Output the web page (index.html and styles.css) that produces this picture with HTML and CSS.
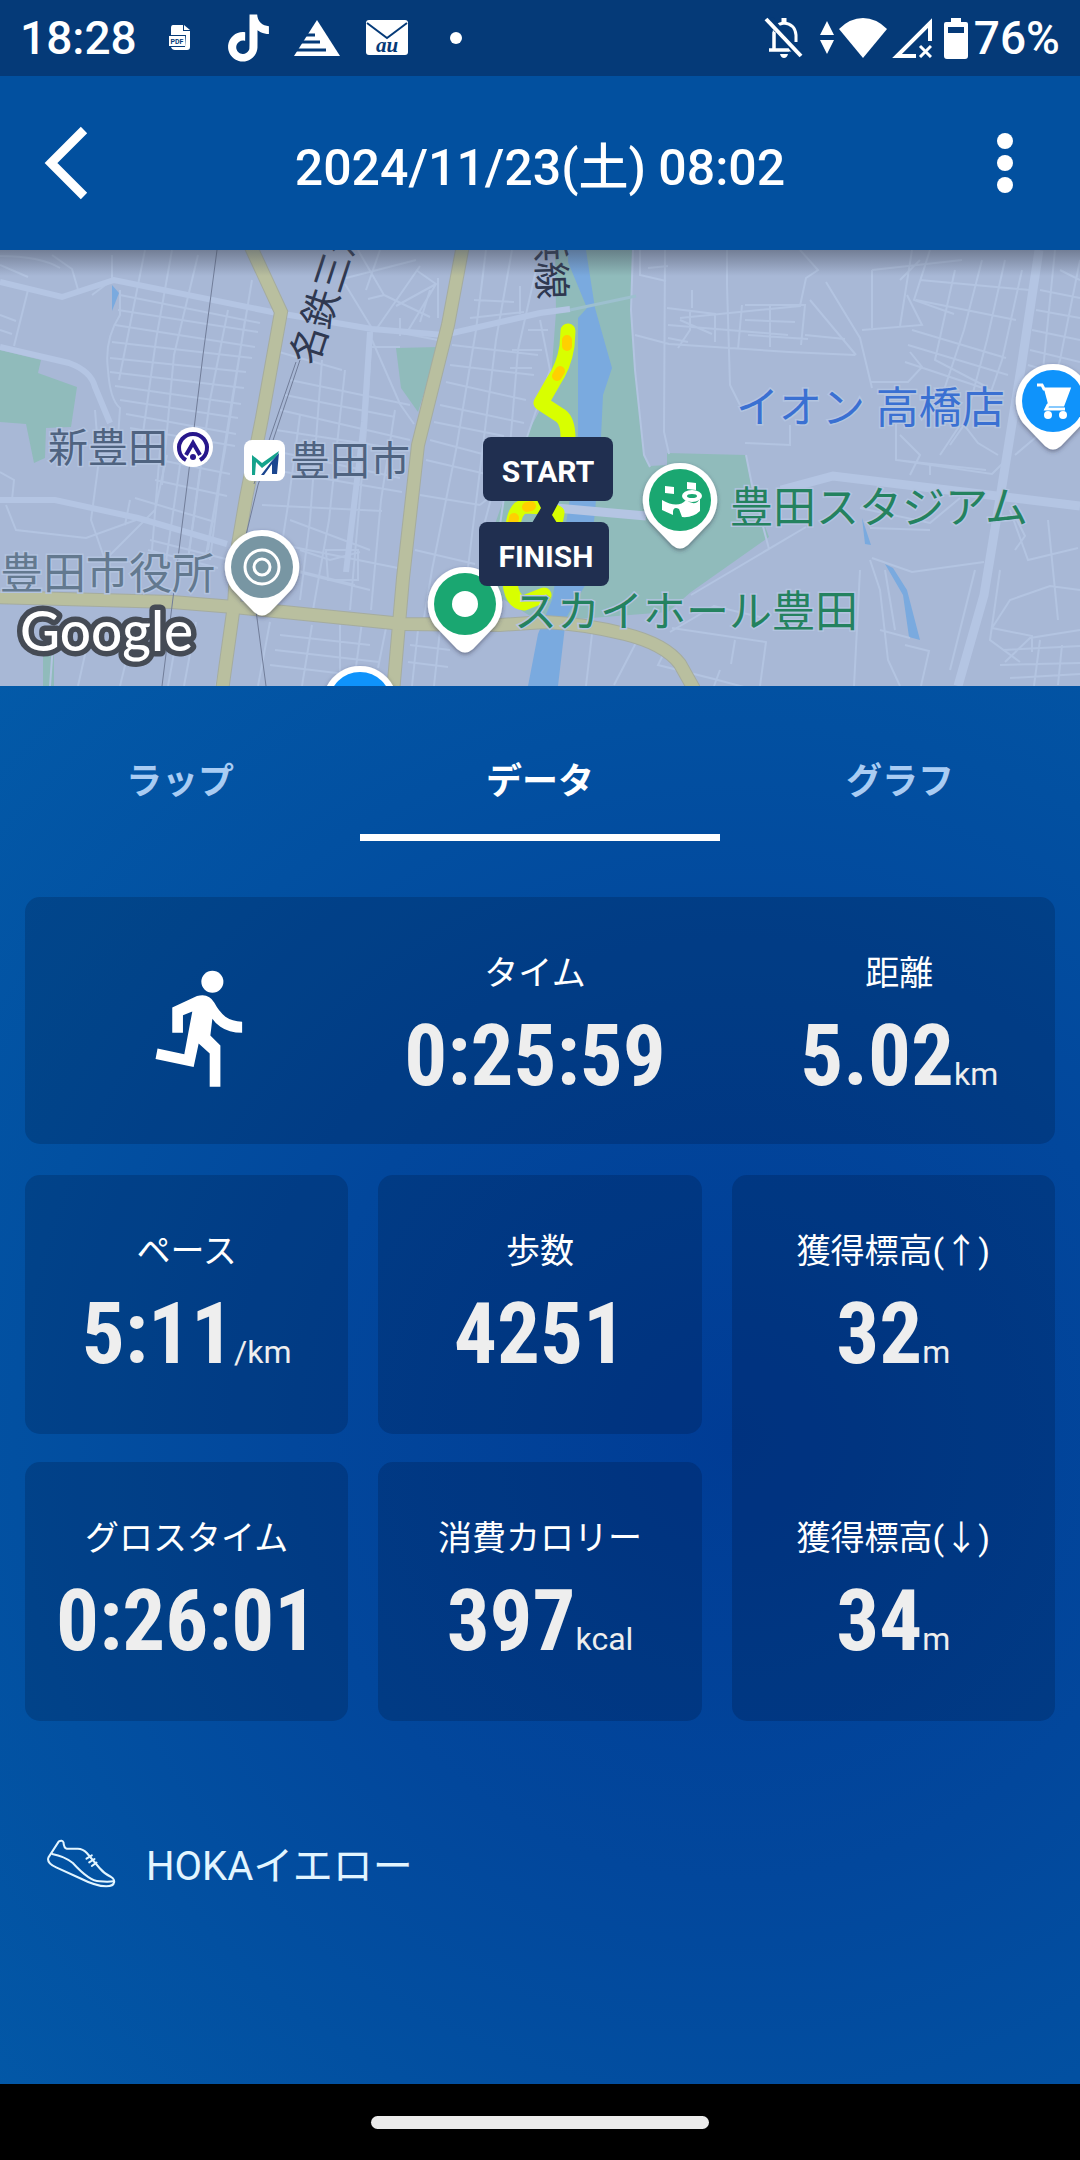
FILE: index.html
```html
<!DOCTYPE html>
<html lang="ja">
<head>
    <meta charset="UTF-8">
    <meta name="viewport" content="width=device-width, initial-scale=1.0">
    <title>2024/11/23(土) 08:02</title>
    <link rel="stylesheet" href="styles.css">
</head>
<body>
    <div class="status-bar">
        <div class="status-left">
            <span class="clock">18:28</span>
            <svg class="icon-pdf" width="22" height="26" viewBox="0 0 22 26">
                <path d="M4 0h10v6h7v16q0 3-3 3H6q-3 0-4-3h14l1-12H2V3q0-3 2-3z" fill="#fff"/>
                <path d="M15 0l6 5h-6z" fill="#fff"/>
                <rect x="0" y="11" width="16" height="10" fill="#fff"/>
                <text x="8" y="19" class="pdf-text">PDF</text>
            </svg>
            <svg class="icon-tiktok" width="47" height="48" viewBox="0 0 24 24" fill="#fff">
                <path d="M12.525.02c1.31-.02 2.61-.01 3.91-.02.08 1.53.63 3.09 1.75 4.17 1.12 1.11 2.7 1.62 4.24 1.79v4.03c-1.44-.05-2.89-.35-4.2-.97-.57-.26-1.1-.59-1.62-.93-.01 2.92.01 5.84-.02 8.75-.08 1.4-.54 2.79-1.35 3.94-1.31 1.92-3.58 3.17-5.91 3.21-1.43.08-2.86-.31-4.08-1.03-2.02-1.19-3.44-3.37-3.65-5.71-.02-.5-.03-1-.01-1.49.18-1.9 1.12-3.72 2.58-4.96 1.66-1.44 3.98-2.13 6.15-1.72.02 1.48-.04 2.96-.04 4.44-.99-.32-2.15-.23-3.02.37-.63.41-1.11 1.04-1.36 1.75-.21.51-.15 1.07-.14 1.61.24 1.64 1.82 3.02 3.5 2.87 1.12-.01 2.19-.66 2.77-1.61.19-.33.4-.67.41-1.06.1-1.79.06-3.57.07-5.36.01-4.03-.01-8.05.02-12.07z"/>
            </svg>
            <svg class="icon-triangle" width="46" height="36" viewBox="0 0 46 36">
                <path d="M23 0l23 36H0z" fill="#fff"/>
                <path d="M10 15h11M6 22h20M2 30h30" stroke="#053a78" stroke-width="3"/>
            </svg>
            <svg class="icon-mail" width="42" height="36" viewBox="0 0 42 36">
                <rect width="42" height="35" rx="3" fill="#fff"/>
                <path d="M1 3l20 15L41 3" stroke="#053a78" stroke-width="2" fill="none"/>
                <text x="21" y="32" class="au-text">au</text>
            </svg>
            <svg class="icon-more" width="12" height="12" viewBox="0 0 12 12"><circle cx="6" cy="6" r="6" fill="#fff"/></svg>
        </div>
        <div class="status-right">
            <svg class="icon-bell" width="40" height="42" viewBox="0 0 40 42" fill="none" stroke="#fff">
                <path d="M5 33h30M10 32V17q0-10 10-11q11 1 12 12v7" stroke-width="3"/>
                <path d="M20 1v5" stroke-width="5"/>
                <path d="M5 2l32 38" stroke="#053a78" stroke-width="8"/>
                <path d="M5 33h20M10 33V15" stroke-width="3"/>
                <path d="M2 2l35 37" stroke-width="4"/>
                <path d="M16 37h8q-1 4-4 4t-4-4z" fill="#fff" stroke="none"/>
            </svg>
            <svg class="icon-traffic" width="14" height="34" viewBox="0 0 14 34" fill="#fff">
                <path d="M7 0l7 14H0zM0 19h14L7 33z"/>
            </svg>
            <svg class="icon-wifi" width="48" height="40" viewBox="0 0 48 40" fill="#fff">
                <path d="M24 40L0 11Q11 0 24 0t24 11z"/>
            </svg>
            <svg class="icon-signal" width="40" height="40" viewBox="0 0 40 40" fill="none" stroke="#fff">
                <path d="M24 38H5L38 5v18" stroke-width="4"/>
                <path d="M28 28l11 11M39 28L28 39" stroke-width="3"/>
            </svg>
            <svg class="icon-battery" width="24" height="41" viewBox="0 0 24 41">
                <path d="M7 0h10v4h5q2 0 2 2v32q0 3-3 3H3q-3 0-3-3V6q0-2 2-2h5z" fill="#fff"/>
                <path d="M4 9h16v6H4z" fill="#053a78"/>
            </svg>
            <span class="battery-text">76%</span>
        </div>
    </div>

    <header>
        <button class="header-btn" aria-label="戻る">
            <svg width="46" height="74" viewBox="0 0 46 74" fill="none" stroke="#fff" stroke-width="9">
                <path d="M41 4L8 37l33 33"/>
            </svg>
        </button>
        <h1>2024/11/23(土) 08:02</h1>
        <button class="header-btn" aria-label="メニュー">
            <svg width="16" height="60" viewBox="0 0 16 60" fill="#fff">
                <circle cx="8" cy="8" r="8"/>
                <circle cx="8" cy="30" r="8"/>
                <circle cx="8" cy="52" r="8"/>
            </svg>
        </button>
    </header>

    <section class="map">
        <svg class="map-canvas" viewBox="0 0 1080 436" preserveAspectRatio="xMidYMid slice">
            <defs>
                <linearGradient id="shade" x1="0" y1="0" x2="0" y2="1">
                    <stop offset="0" stop-color="#3d4454" stop-opacity=".5"/>
                    <stop offset="1" stop-color="#3d4454" stop-opacity="0"/>
                </linearGradient>
                <filter id="pin-shadow" x="-20%" y="-20%" width="140%" height="150%">
                    <feDropShadow dx="0" dy="2" stdDeviation="2" flood-color="#334" flood-opacity=".5"/>
                </filter>
                <path id="pin" d="M0-37a37 37 0 0 1 30 59L8 45q-8 7-16 0L-30 22A37 37 0 0 1 0-37z" fill="#fff" filter="url(#pin-shadow)"/>
            </defs>

            <rect width="1080" height="436" fill="#a8b8d6"/>

            <!-- parks -->
            <g fill="#90bbbb">
                <path d="M0 100l41 10-3 13 39 14-6 40-25 1-1 30-11 5-8-39-26-2z"/>
                <path d="M396 98l43-1-21 65-17-24z"/>
                <path d="M43 402h11v34H43z"/>
                <path d="M555 0h77l-1 60 4 60 9 85 6 11 17-1v-12l79 2 6 35 17 47-78 55-23 20-128 10-65-40 38-110 15-40 22-40 6-80z"/>
            </g>

            <!-- river and creeks -->
            <g fill="#7aaadf">
                <path d="M568 0h18l9 58 17 60-9 27-2 42-6 75-8 70-21 36-8 68h-30l10-52 14-34 16-88 10-75V68l9-10-19-46z"/>
                <path d="M112 35l7 8-7 18z"/>
                <path d="M862 268l9 27-6-1zM885 314l8 4 14 22 13 50-11-3-6-42z"/>
            </g>

            <!-- small streets -->
            <g class="street">
                <path d="M0 15l28 12M52 5l20 14 7 24M28 40l-14 56M112 5v25l-20 15M0 65l16 6M0 80l12 4M0 6q40 0 60 12"/>
                <path d="M120 40v25q-16 25-12 55 2 30 12 38l-2 30M145 0l-12 60-14 70M172 0l-16 90-14 100M198 5l-24 100-12 130M228 60l-18 90-22 160M252 30l-20 120-24 150M245 70l-20 130-20 110"/>
                <path d="M120 45l140 28M118 60l140 22M115 75l140 22M112 92l140 16M110 108l136 14M110 122l134 16M115 136l126 18M120 150l118 18M126 164l110 20M130 178l105 18"/>
                <path d="M0 222l14 8-2 20M6 255l10 25 70 8 50-18M95 160l4 50-8 60 14 40 50-50 12-55M130 250l-5 25M135 248l80 24M160 210l70 14M155 230l72 16M150 290l80 20M148 300l70 18M160 200l-8 100M180 215l-14 96M200 220l-12 90M220 230l-10 80"/>
                <path d="M272 100l70 20M290 130l120 25M285 145l110 22M280 160l130 30M276 180l130 20M270 200l130 28M262 218l140 24M262 255l120 6M258 290l140 28M255 310l100 25M300 165l-12 90-14 90M322 110l-12 160-10 80M345 120l-16 150-16 90M372 80l-6 100-16 180M395 160l-14 90-10 110M326 300h32v30h-30z"/>
                <path d="M346 28l70-18M420 16l-45 65M345 34l28 46M358 0l26 45-16 4M380 0l-14 40M416 20l20 14-30 50M436 34l-40 22M384 45l46 22M400 68v18M372 90l28 64 14 20M366 97h34M430 40l-10 32M438 28v40M396 82l42 8"/>
                <path d="M486 0l-10 80-20 120-24 120-10 60M512 0l-16 90-16 130-16 130M536 20l-18 80-10 120-16 110M474 50l40 2M470 68l54-6M520 36v28M452 95l86 10M450 115l84 10M446 132l80 18M440 155l84 18M434 172l70 14M430 190l60 16M426 210l60 14M420 245l60 10M415 300l60 14M480 255l12-10-8 30M540 70l10 50-24 70M528 80h20M512 100h30M510 118h22"/>
                <path d="M54 380l-4 56M86 400l-8 36M130 395l-10 41M180 370l-12 66M196 372l-12 64M228 378l-12 58M270 372l-12 64M312 375l-10 61M340 375v61M362 372l-8 60M386 378l-8 40M418 380l-6 56M440 380l-6 56M280 385l90 10M275 400l104 12M270 415l100 12M410 395l40 5M408 412l40 5M300 300l30 10 30-8M290 270l80 30M290 320l80 20"/>
                <path d="M640 0v25l26 6M648 18l20-2M727 0v35M800 0l18 20-12 8-6 28-120 12M690 60v20l-12 18M667 58l48 6v28M668 75l120 10M745 55h60l-4 40M742 55l-4 44M745 70l50 2M770 55v42M668 88l20 4M680 70l32 14M805 85l40 4M748 85l60 4M692 40v18"/>
                <path d="M665 0l-1 182 5 22M633 0l-2 60 4 60 9 85 6 12M635 85l34 9 120 8 66 3M727 35l3 100 10 20M826 32l34 56 12 50M810 50l46 55M862 80l60-5-15-30M872 20l90-10M872 20v58M900 30l20-20M912 0l-12 76"/>
                <path d="M870 132h38l14-15-12-15M930 0l-16 50 40 14M955 20l-20 90 50 26M982 10l-18 70-20 60M1005 10l-18 80-16 60M1022 20l-20 90-16 46M920 30l110 10M916 50l100 20M912 80l94 28M908 95l100 30M905 112l90 30"/>
                <path d="M1055 0l-12 120M1080 10l-20 100-10 30M1040 40l40 8M1036 60l44 8M1032 80l48 10M1030 100l50 12M1028 115l52 15M1060 20l20 10M1060 155l20 5"/>
                <path d="M896 170v40l96 14 12-12M900 185l20 20-10 20M896 210l90 10M950 195l14-20 14 18 20 12M960 175l-20 30M930 215v10M1015 205l40-34M745 193l45 2V175"/>
                <path d="M691 345l115-68M746 205l6 30 17 64M860 258l70 15 30-25M870 278l60 2M872 308l40 14 72-10M860 320l-6 116M870 310l10 30 8 70 12 26M885 320l10 60M905 395l24 6-8 35M880 380l30 8M975 320l-25 100"/>
                <path d="M1010 260l18 50 50-12M1015 300l10-14-10-20M1048 270l10 100M1000 320l-10 70 30 22M1080 340l-30-4-40 14-18 28 40 8v16M1080 380l-50 8-25 24M1003 400l77-4M1000 415l80-2M1010 428l70-4M1062 395l-4 40M1040 390l-6 46"/>
                <path d="M672 378l94 14-6 44M668 395l-10 20 56 14 30 8M735 390l-4 24M640 385l-26 50M592 384l-6 52M670 382l44-26 50 12M720 420l-6 16"/>
            </g>

            <!-- secondary roads -->
            <g class="road">
                <path d="M0 32l62 15 52-17 158 32 100 17 72 6 96-22 30-4"/>
                <path d="M0 97l69 16q22 8 26 24l15 36M0 250h55l83 18 89 26"/>
                <path d="M370 82l-6 90-18 150"/>
                <path class="thin" d="M570 60l66-14"/>
                <path class="wide" d="M556 258l90 8"/>
                <path class="wide" d="M781 240l52-14 247 30"/>
                <path class="wide" d="M1039 0l-17 112-21 130-17 103-26 91"/>
            </g>

            <!-- main roads -->
            <g class="main-edge">
                <path id="road-a" d="M250 -5l31 67-19 106-16 80-8 47-4 60-12 86"/>
                <path id="road-b" d="M463-5l-15 80-30 120-15 133-10 115"/>
                <path id="road-c" d="M-5 347l177 5 62 5 169 17 97 1 45-3q40 2 80 12 40 10 55 30l14 25"/>
            </g>
            <g class="main-road">
                <use href="#road-a"/>
                <use href="#road-b"/>
                <use href="#road-c"/>
            </g>

            <!-- railways -->
            <g class="rail">
                <path d="M217 0l-14 105-15 123-26 208M300 110l-42 125-12 50 20 151M296 112l-42 122"/>
            </g>

            <text class="rail-name" transform="translate(316 117) rotate(-72)">名鉄三河線</text>
            <text class="rail-name" transform="translate(536 -26) rotate(88)">浜線</text>

            <!-- running route -->
            <g class="route">
                <path d="M568 81l-1 15q-3 20-14 36l-12 21 20 13q8 6 7 28M545 257l-20-1q-10 2-12 20l-3 57q2 19 14 20l20-8M545 257l12 6-4 20"/>
                <path class="route-slow" d="M567 90v6M560 121l-3 5M531 256l-4 1M514 268l-1 5"/>
            </g>

            <!-- stations -->
            <text class="place station" x="48" y="212">新豊田</text>
            <circle cx="193" cy="197" r="20" fill="#fff"/>
            <path d="M186 210a14 14 0 1 1 14 0" fill="none" stroke="#27178c" stroke-width="4"/>
            <path d="M186 205l7-12 7 12" fill="none" stroke="#27178c" stroke-width="4"/>
            <circle cx="193" cy="207" r="3" fill="#27178c"/>

            <rect x="244" y="190" width="41" height="41" rx="8" fill="#fff"/>
            <path d="M252 225v-20l10 8 17-12q-1 5-8 10l-9 7-6-6-1 13z" fill="#14a38c"/>
            <path d="M261 225l10-13 8-9-2 21h-5v-10l-8 11z" fill="#1a468f"/>
            <text class="place station" x="290" y="225">豊田市</text>

            <!-- places -->
            <text class="place office" x="0" y="339">豊田市役所</text>
            <use href="#pin" x="262" y="317"/>
            <circle cx="262" cy="317" r="31" fill="#7896a3"/>
            <circle cx="262" cy="317" r="17" fill="none" stroke="#fff" stroke-width="3"/>
            <circle cx="262" cy="317" r="8" fill="none" stroke="#fff" stroke-width="3"/>

            <use href="#pin" x="465" y="354"/>
            <circle cx="465" cy="354" r="31" fill="#1aa771"/>
            <circle cx="465" cy="354" r="13" fill="#fff"/>
            <text class="place green" x="514" y="377">スカイホール豊田</text>

            <use href="#pin" x="680" y="250"/>
            <circle cx="680" cy="250" r="31" fill="#1aa771"/>
            <g fill="#fff">
                <path d="M665 236l9 1v7l-9-1zM687 232l9 1v7l-9-1z"/>
                <path d="M662 250q16 9 24 0 9 7 14-1v12q-7 7-18 6l-3-8q-5-3-6 2v4l-11-5z"/>
                <ellipse cx="692" cy="246" rx="10" ry="6"/>
            </g>
            <ellipse cx="692" cy="246" rx="5" ry="2" fill="#1aa771"/>
            <text class="place green" x="730" y="273">豊田スタジアム</text>

            <text class="place shop" x="736" y="173">イオン 高橋店</text>
            <use href="#pin" x="1053" y="151"/>
            <circle cx="1053" cy="151" r="31" fill="#0f93fb"/>
            <path d="M1037 135h5l2 4h25l-6 16h-15l-2 4h19" fill="none" stroke="#fff" stroke-width="3"/>
            <path d="M1044 139h25l-6 15h-15z" fill="#fff"/>
            <circle cx="1048" cy="165" r="4" fill="#fff"/>
            <circle cx="1063" cy="165" r="4" fill="#fff"/>

            <use href="#pin" x="360" y="453"/>
            <circle cx="360" cy="453" r="31" fill="#0f93fb"/>

            <!-- start / finish flags -->
            <path d="M537 250h23l-8 15 5 8h-25l9-15z" fill="#202f50"/>
            <rect x="483" y="187" width="130" height="64" rx="8" fill="#202f50"/>
            <rect x="479" y="272" width="130" height="64" rx="8" fill="#202f50"/>
            <text class="flag" x="548" y="232">START</text>
            <text class="flag" x="546" y="317">FINISH</text>

            <text class="google" x="20" y="401">Google</text>
            <rect width="1080" height="26" fill="url(#shade)"/>
        </svg>
    </section>

    <main>
        <div class="tabs" role="tablist">
            <button class="tab" role="tab" aria-selected="false">ラップ</button>
            <button class="tab active" role="tab" aria-selected="true">データ</button>
            <button class="tab" role="tab" aria-selected="false">グラフ</button>
        </div>

        <section class="card summary">
            <div class="runner">
                <svg width="88" height="117" viewBox="75 62 262 350" fill="#fff">
                    <circle cx="246" cy="97" r="33"/>
                    <path d="M126 174l74-34q35-10 52 20 13 25 33 42 20 14 50 15v33q-40 0-65-18-15-10-24-24l-6 50 30 30v123h-32v-99l-33-30-15 70-114-24 6-31 80 17 24-128-28 11v53h-32z"/>
                </svg>
            </div>
            <div class="stat">
                <p class="label">タイム</p>
                <p class="value">0:25:59</p>
            </div>
            <div class="stat">
                <p class="label">距離</p>
                <p class="value">5.02<span class="unit">km</span></p>
            </div>
        </section>

        <section class="grid">
            <div class="card stat">
                <p class="label">ペース</p>
                <p class="value">5:11<span class="unit">/km</span></p>
            </div>
            <div class="card stat">
                <p class="label">歩数</p>
                <p class="value">4251</p>
            </div>
            <div class="card elevation">
                <div class="stat">
                    <p class="label">獲得標高(↑)</p>
                    <p class="value">32<span class="unit">m</span></p>
                </div>
                <div class="stat">
                    <p class="label">獲得標高(↓)</p>
                    <p class="value">34<span class="unit">m</span></p>
                </div>
            </div>
            <div class="card stat">
                <p class="label">グロスタイム</p>
                <p class="value">0:26:01</p>
            </div>
            <div class="card stat">
                <p class="label">消費カロリー</p>
                <p class="value">397<span class="unit">kcal</span></p>
            </div>
        </section>

        <div class="shoes">
            <svg width="72" height="50" viewBox="20 20 215 150" fill="none" stroke="#e2f5ff" stroke-width="6" stroke-linecap="round" stroke-linejoin="round">
                <path d="M58 30q10-5 14 3 1 17 10 19h33q15 0 27 13l38 45q15 18 35 27 10 6 9 15-2 13-24 13-30 0-80-25l-70-32q-30-13-23-30z"/>
                <path d="M38 68q37 7 62 27 50 55 80 55 25 2 42 0M141 82l16-10M149 93l16-10M157 104l14-10"/>
            </svg>
            <span>HOKAイエロー</span>
        </div>
    </main>

    <footer>
        <div class="home-bar"></div>
    </footer>
</body>
</html>
```

FILE: styles.css
```css
* {
    margin: 0;
    padding: 0;
    box-sizing: border-box;
}

body {
    min-height: 100vh;
    display: flex;
    flex-direction: column;
    overflow-x: hidden;
    background: #02509f;
    color: #fff;
    font-family: Roboto, "Noto Sans CJK JP", sans-serif;
}

button {
    background: none;
    border: none;
    color: inherit;
    font-family: inherit;
    cursor: pointer;
}

svg {
    display: block;
}

/* Status bar */
.status-bar {
    height: 76px;
    padding: 0 20px;
    display: flex;
    justify-content: space-between;
    align-items: center;
    background: #053a78;
    font-size: 46px;
    font-weight: 500;
}

.status-left,
.status-right {
    display: flex;
    align-items: center;
}

.icon-pdf {
    margin-left: 32px;
}

.icon-tiktok {
    margin-left: 34px;
}

.icon-triangle {
    margin-left: 22px;
}

.icon-mail {
    margin-left: 26px;
}

.icon-more {
    margin-left: 42px;
}

.icon-traffic {
    margin-left: 16px;
}

.icon-wifi,
.icon-signal {
    margin-left: 5px;
}

.icon-battery {
    margin: 0 6px 0 12px;
}

.pdf-text {
    font-size: 7px;
    font-weight: 700;
    fill: #053a78;
    text-anchor: middle;
}

.au-text {
    font-family: "Liberation Serif", serif;
    font-size: 21px;
    font-style: italic;
    font-weight: 700;
    fill: #053a78;
    text-anchor: middle;
}

/* Header */
header {
    height: 174px;
    padding: 0 43px;
    display: flex;
    justify-content: space-between;
    align-items: center;
    background: #02509f;
}

.header-btn {
    width: 64px;
    display: flex;
}

.header-btn:last-child {
    justify-content: flex-end;
    padding-right: 24px;
}

h1 {
    font-size: 50px;
    font-weight: 500;
}

/* Map */
.map-canvas {
    width: 100%;
    height: 436px;
}

.street {
    fill: none;
    stroke: #b3c4e1;
    stroke-width: 2;
}

.road {
    fill: none;
    stroke: #b4c5e3;
    stroke-width: 6;
}

.road .thin {
    stroke: #9dc0cf;
    stroke-width: 3;
}

.road .wide {
    stroke-width: 9;
}

.main-edge {
    fill: none;
    stroke: #a5ac9f;
    stroke-width: 14;
}

.main-road {
    fill: none;
    stroke: #b9bf9f;
    stroke-width: 12;
}

.rail {
    fill: none;
    stroke: #717d99;
    stroke-width: 1;
}

.rail-name {
    font-size: 38px;
    fill: #2f3850;
}

.route {
    fill: none;
    stroke: #d8ff00;
    stroke-width: 15;
    stroke-linecap: round;
    stroke-linejoin: round;
}

.route-slow {
    stroke: #ffd000;
    stroke-width: 10;
}

.place {
    font-size: 43px;
    stroke: #b3c4e0;
    stroke-width: 3;
    paint-order: stroke;
}

.station {
    font-size: 40px;
    fill: #4f6380;
}

.office {
    fill: #63798f;
}

.green {
    fill: #24825f;
}

.shop {
    fill: #3a70d2;
}

.flag {
    font-size: 30px;
    font-weight: 700;
    fill: #fff;
    text-anchor: middle;
}

.google {
    font-family: Lato, sans-serif;
    font-size: 55px;
    font-weight: 500;
    fill: #fff;
    stroke: #454b55;
    stroke-width: 11;
    stroke-linejoin: round;
    paint-order: stroke;
}

/* Main content */
main {
    flex: 1;
    padding-bottom: 60px;
    background: radial-gradient(circle at 68% 54%, #003c95 0, #02479c 440px, #0250a1 720px, #035ba9 1100px);
}

.tabs {
    display: grid;
    grid-template-columns: repeat(3, 1fr);
}

.tab {
    height: 155px;
    padding-top: 36px;
    border-bottom: 7px solid transparent;
    color: #a9ccf3;
    font-size: 36px;
    font-weight: 700;
}

.tab.active {
    color: #fff;
    border-color: #fff;
}

.card {
    border-radius: 15px;
    background: rgba(0, 5, 25, 0.18);
}

.summary {
    margin: 56px 25px 31px;
    padding-right: 10px;
    height: 247px;
    display: grid;
    grid-template-columns: 2fr 3fr 2fr;
}

.runner {
    display: flex;
    justify-content: center;
    align-items: center;
    padding: 16px 0 0 56px;
}

.grid {
    margin: 0 25px;
    display: grid;
    grid-template-columns: repeat(3, 1fr);
    grid-auto-rows: 259px;
    gap: 28px 30px;
}

.elevation {
    grid-row: span 2;
    grid-column: 3;
    display: flex;
    flex-direction: column;
    gap: 28px;
}

.elevation .stat {
    height: 259px;
}

.stat {
    padding-top: 51px;
    text-align: center;
}

.label {
    font-size: 34px;
    line-height: 50px;
}

.value {
    color: #eee;
    font-family: "Roboto Condensed", Roboto, sans-serif;
    font-size: 85px;
    font-weight: 700;
    line-height: 116px;
}

.unit {
    font-family: Roboto, sans-serif;
    font-size: 32px;
    font-weight: 400;
}

/* Shoes */
.shoes {
    margin: 113px 46px 0;
    display: flex;
    align-items: center;
    gap: 28px;
    color: #e2f5ff;
    font-size: 40px;
}

/* Navigation bar */
footer {
    height: 76px;
    display: flex;
    justify-content: center;
    align-items: center;
    background: #000;
}

.home-bar {
    width: 338px;
    height: 13px;
    border-radius: 7px;
    background: #ebebeb;
}
```
